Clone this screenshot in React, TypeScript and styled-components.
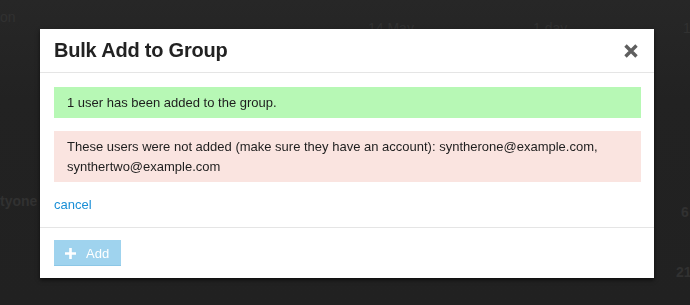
import React from "react";
import styled, { createGlobalStyle } from "styled-components";

const Global = createGlobalStyle`
  html, body { margin: 0; padding: 0; height: 100%; }
  body {
    background: #222222;
    font-family: "Liberation Sans", Arial, sans-serif;
    overflow: hidden;
  }
`;

const Page = styled.div`
  display: grid;
  grid-template-columns: 368px 165px 147px 1fr;
  grid-template-rows: 40px 150px 60px 55px;
  font-size: 14px;
  line-height: 16px;
  color: #313131;
  height: 305px;
  background: linear-gradient(#272727, #222222 100px, #212121);
`;

const Cell = styled.div<{ $col: number; $row: number; $bold?: boolean; $dx?: number; $top?: number }>`
  grid-column: ${(p) => p.$col};
  grid-row: ${(p) => p.$row};
  font-weight: ${(p) => (p.$bold ? 700 : 400)};
  margin-left: ${(p) => p.$dx ?? 0}px;
  margin-top: ${(p) => p.$top ?? 0}px;
  white-space: nowrap;
  align-self: start;
`;

const Overlay = styled.div`
  position: fixed;
  inset: 0;
  display: flex;
  align-items: flex-start;
  padding: 29px 0 0 40px;
`;

const Modal = styled.div`
  width: 614px;
  background: #ffffff;
  box-shadow: 0 2px 4px rgba(0, 0, 0, 0.6);
  display: flex;
  flex-direction: column;
`;

const Header = styled.div`
  height: 44px;
  box-sizing: border-box;
  display: flex;
  align-items: center;
  justify-content: space-between;
  padding: 0 16px 0 14px;
  border-bottom: 1px solid #e5e5e5;
`;

const Title = styled.h3`
  margin: 0;
  font-size: 20px;
  font-weight: 700;
  color: #222222;
  letter-spacing: -0.2px;
`;

const Close = styled.button`
  border: 0;
  background: none;
  padding: 0;
  width: 14px;
  height: 14px;
  display: flex;
  cursor: pointer;
`;

const Body = styled.div`
  padding: 14px 13px 12px 14px;
  display: flex;
  flex-direction: column;
  gap: 13px;
`;

const Alert = styled.div<{ $kind: "success" | "danger" }>`
  background: ${(p) => (p.$kind === "success" ? "#b7f8b5" : "#fae4e0")};
  color: #1e1e1e;
  font-size: 13px;
  line-height: 20px;
  padding: 6px 13px 5px;
`;

const CancelLink = styled.a`
  color: #1a8fd6;
  font-size: 13px;
  line-height: 20px;
  text-decoration: none;
  align-self: flex-start;
`;

const Footer = styled.div`
  border-top: 1px solid #e5e5e5;
  padding: 12px 14px 12px;
  display: flex;
`;

const AddButton = styled.button`
  height: 26px;
  width: 67px;
  border: 0;
  background: #9fd3ee;
  color: #ffffff;
  font-family: "Liberation Sans", Arial, sans-serif;
  font-size: 13px;
  display: flex;
  align-items: center;
  gap: 10px;
  padding: 0 0 0 11px;
  box-shadow: inset 0 -1px 0 #8cc7e6;
`;

export default function App() {
  return (
    <>
      <Global />
      <Page>
        <Cell $col={1} $row={1} $top={9}>on</Cell>
        <Cell $col={2} $row={1} $top={20}>14 May</Cell>
        <Cell $col={3} $row={1} $top={20}>1 day</Cell>
        <Cell $col={4} $row={1} $top={20} $dx={3}>1</Cell>
        <Cell $col={1} $row={3} $top={3} $bold>tyone</Cell>
        <Cell $col={4} $row={3} $top={14} $bold $dx={1}>6</Cell>
        <Cell $col={4} $row={4} $top={14} $bold $dx={-4}>21</Cell>
      </Page>
      <Overlay>
        <Modal>
          <Header>
            <Title>Bulk Add to Group</Title>
            <Close aria-label="Close">
              <svg width="14" height="14" viewBox="0 0 14 14">
                <path d="M1.5 1.5 L12.5 12.5 M12.5 1.5 L1.5 12.5" stroke="#5f5f5f" strokeWidth="3.4" strokeLinecap="butt" />
              </svg>
            </Close>
          </Header>
          <Body>
            <Alert $kind="success">1 user has been added to the group.</Alert>
            <Alert $kind="danger">
              These users were not added (make sure they have an account): syntherone@example.com,
              synthertwo@example.com
            </Alert>
            <CancelLink href="#">cancel</CancelLink>
          </Body>
          <Footer>
            <AddButton>
              <svg width="11" height="11" viewBox="0 0 11 11">
                <path d="M5.5 0 V11 M0 5.5 H11" stroke="#ffffff" strokeWidth="2.6" />
              </svg>
              Add
            </AddButton>
          </Footer>
        </Modal>
      </Overlay>
    </>
  );
}
